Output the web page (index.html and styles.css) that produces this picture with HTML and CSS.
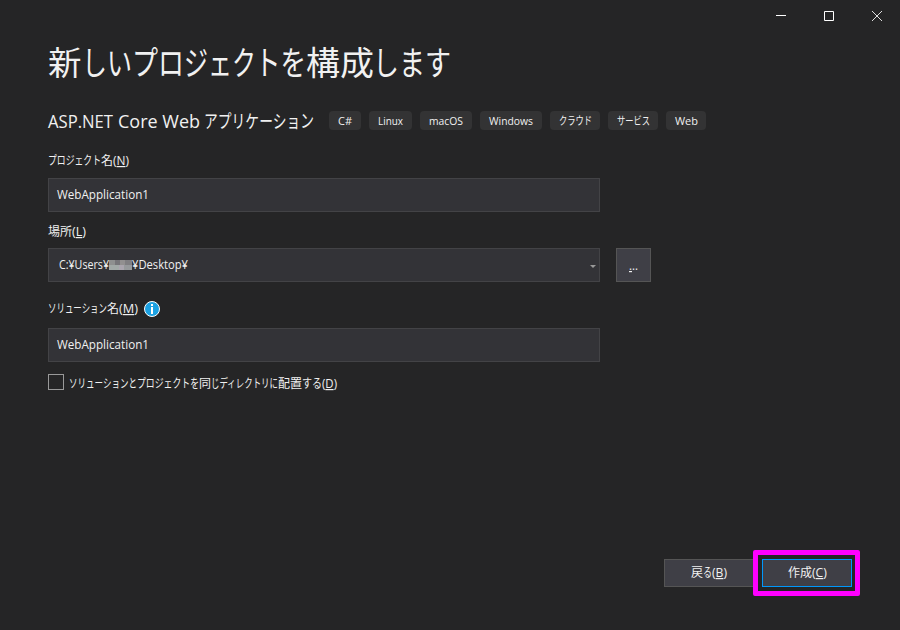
FILE: index.html
```html
<!DOCTYPE html>
<html lang="ja">
<head>
<meta charset="utf-8">
<title>新しいプロジェクトを構成します</title>
<link rel="stylesheet" href="styles.css">
</head>
<body>
<div class="window">
  <header class="titlebar">
    <svg class="control" viewBox="0 0 48 32"><path d="M20 15.5h10"/></svg>
    <svg class="control" viewBox="0 0 48 32"><path d="M20.500 11.500h9v9h-9z"/></svg>
    <svg class="control close" viewBox="0 0 48 32"><path d="M20 11l10 10M30 11l-10 10"/></svg>
  </header>
  <main class="content">
    <h1 class="heading"><svg class="type" width="410" height="50">
      <text x="0" y="34">新</text>
      <text x="34" y="34" textLength="50" lengthAdjust="spacingAndGlyphs">しい</text>
      <text x="84" y="34" textLength="52" lengthAdjust="spacingAndGlyphs">プロ</text>
      <text x="136" y="34" textLength="72" lengthAdjust="spacingAndGlyphs">ジェク</text>
      <text x="207" y="34" textLength="51" lengthAdjust="spacingAndGlyphs">トを</text>
      <text x="258" y="34" textLength="68" lengthAdjust="spacingAndGlyphs">構成</text>
      <text x="325" y="34" textLength="78" lengthAdjust="spacingAndGlyphs">します</text>
    </svg></h1>
    <div class="template">
      <svg class="type template-name" width="281" height="30">
        <text x="0" y="22" textLength="65" lengthAdjust="spacingAndGlyphs">ASP.NET</text>
        <text x="70" y="22" textLength="82" lengthAdjust="spacingAndGlyphs">Core Web</text>
        <text x="156" y="22" textLength="110" lengthAdjust="spacingAndGlyphs">アプリケーション</text>
      </svg>
      <ul class="tags">
        <li><svg class="type" width="14" height="19"><text y="14" textLength="14" lengthAdjust="spacingAndGlyphs">C#</text></svg></li>
        <li><svg class="type" width="25" height="19"><text y="14" textLength="25" lengthAdjust="spacingAndGlyphs">Linux</text></svg></li>
        <li><svg class="type" width="34" height="19"><text y="14" textLength="34" lengthAdjust="spacingAndGlyphs">macOS</text></svg></li>
        <li><svg class="type" width="44" height="19"><text y="14" textLength="44" lengthAdjust="spacingAndGlyphs">Windows</text></svg></li>
        <li><svg class="type" width="32" height="19"><text y="14" textLength="33" lengthAdjust="spacingAndGlyphs">クラウド</text></svg></li>
        <li><svg class="type" width="32" height="19"><text y="14" textLength="33" lengthAdjust="spacingAndGlyphs">サービス</text></svg></li>
        <li><svg class="type" width="22" height="19"><text y="14" textLength="23" lengthAdjust="spacingAndGlyphs">Web</text></svg></li>
      </ul>
    </div>

    <div class="label"><svg class="type" width="90" height="20">
      <text x="0" y="14" textLength="53" lengthAdjust="spacingAndGlyphs">プロジェクト</text><text x="53" y="14">名</text>
      <text x="65" y="14" textLength="16" lengthAdjust="spacingAndGlyphs">(<tspan class="key">N</tspan>)</text>
    </svg></div>
    <div class="field"><svg class="type" width="100" height="32"><text y="20" textLength="92" lengthAdjust="spacingAndGlyphs">WebApplication1</text></svg></div>

    <div class="label label-location"><svg class="type" width="60" height="20">
      <text x="0" y="14" textLength="24" lengthAdjust="spacingAndGlyphs">場所</text>
      <text x="24" y="14" textLength="14" lengthAdjust="spacingAndGlyphs">(<tspan class="key">L</tspan>)</text>
    </svg></div>
    <div class="location">
      <div class="field combo">
        <svg class="type" width="140" height="32">
          <text x="0" y="20" textLength="50" lengthAdjust="spacingAndGlyphs">C:¥Users¥</text>
          <g class="redacted">
            <path fill="#8f9090" d="M50 11h6v5h-6z"/><path fill="#77767a" d="M56 11h5v5h-5z"/><path fill="#929090" d="M61 11h5v5h-5z"/><path fill="#807f82" d="M66 11h7v5h-7z"/>
            <path fill="#a2a9a7" d="M50 16h10v5h-10z"/><path fill="#aaa5ae" d="M60 16h5v5h-5z"/><path fill="#96999b" d="M65 16h8v5h-8z"/>
          </g>
          <text x="73" y="20" textLength="56" lengthAdjust="spacingAndGlyphs">¥Desktop¥</text>
        </svg>
        <svg class="arrow" viewBox="0 0 6 3"><path d="M0 0h6L3 3z"/></svg>
      </div>
      <div class="browse"><svg class="type" width="9" height="32"><text y="21" textLength="9" lengthAdjust="spacingAndGlyphs"><tspan class="key">.</tspan>..</text></svg></div>
    </div>

    <div class="label label-solution">
      <svg class="type" width="96" height="20">
        <text x="0" y="14" textLength="59" lengthAdjust="spacingAndGlyphs">ソリューション</text><text x="59" y="14">名</text>
        <text x="71" y="14" textLength="19" lengthAdjust="spacingAndGlyphs">(<tspan class="key">M</tspan>)</text>
      </svg>
      <svg class="info" viewBox="0 0 16 16"><circle cx="8" cy="8" r="7.500"/><path d="M7 3h2v2H7zM7 6h2v7H7z"/></svg>
    </div>
    <div class="field"><svg class="type" width="100" height="32"><text y="20" textLength="92" lengthAdjust="spacingAndGlyphs">WebApplication1</text></svg></div>

    <div class="option">
      <span class="checkbox"></span>
      <svg class="type" width="280" height="20">
        <text x="0" y="16" textLength="68" lengthAdjust="spacingAndGlyphs">ソリューションと</text>
        <text x="68" y="16" textLength="62" lengthAdjust="spacingAndGlyphs">プロジェクトを</text>
        <text x="130" y="16">同</text>
        <text x="142" y="16" textLength="67" lengthAdjust="spacingAndGlyphs">じディレクトリに</text>
        <text x="209" y="16" textLength="24" lengthAdjust="spacingAndGlyphs">配置</text>
        <text x="233" y="16" textLength="20" lengthAdjust="spacingAndGlyphs">する</text>
        <text x="253" y="16" textLength="15" lengthAdjust="spacingAndGlyphs">(<tspan class="key">D</tspan>)</text>
      </svg>
    </div>
  </main>
  <footer class="actions">
    <div class="button"><svg class="type" width="36" height="26">
      <text x="0" y="17">戻</text><text x="12" y="17" textLength="9" lengthAdjust="spacingAndGlyphs">る</text>
      <text x="21" y="17" textLength="15" lengthAdjust="spacingAndGlyphs">(<tspan class="key">B</tspan>)</text>
    </svg></div>
    <div class="highlight"><div class="button primary"><svg class="type" width="39" height="26">
      <text x="0" y="17" textLength="24" lengthAdjust="spacingAndGlyphs">作成</text>
      <text x="24" y="17" textLength="15" lengthAdjust="spacingAndGlyphs">(<tspan class="key">C</tspan>)</text>
    </svg></div></div>
  </footer>
</div>
</body>
</html>
```
FILE: styles.css
```css
* { box-sizing: border-box; }

body {
  margin: 0;
  background: #252526;
  color: #f1f1f1;
  font: 12px "Open Sans", "Noto Sans CJK JP", sans-serif;
}

.window {
  display: flex;
  flex-direction: column;
  width: 900px;
  height: 630px;
  background: #252526;
}

svg { display: block; flex: none; }

.type { overflow: visible; fill: #f1f1f1; }
.key { text-decoration: underline; text-underline-offset: 2px; text-decoration-thickness: 1px; }

.titlebar { display: flex; justify-content: flex-end; height: 32px; }
.control { width: 48px; height: 32px; fill: none; stroke: #fff; stroke-width: 1; }
.close { stroke: #ddd; }

.content { flex: 1; padding: 9px 48px 0; }

.heading { height: 50px; margin: 0; font-size: 33.5px; font-weight: 400; }

.template { display: flex; align-items: flex-start; height: 60px; padding-top: 15px; }
.template-name { font-size: 18.500px; }
.tags { display: flex; gap: 8px; margin: 5px 0 0; padding: 0; list-style: none; font-size: 11px; }
.tags li { height: 19px; padding: 0 9px; border-radius: 4px; background: #333334; }

.label { display: flex; height: 27px; }
.label-location { margin-top: 10px; height: 26px; }
.label-solution { margin-top: 17px; height: 29px; }
.info { width: 16px; height: 16px; margin-top: 2px; }
.info circle { fill: #1ba1e2; stroke: #fff; stroke-width: 1; }
.info path { fill: #fff; }

.field {
  display: flex;
  width: 552px;
  height: 34px;
  padding: 0 8px;
  border: 1px solid #434346;
  background: #333337;
}

.location { display: flex; gap: 16px; }
.combo { justify-content: space-between; align-items: center; padding: 0 3px 0 10px; }
.arrow { width: 6px; height: 3px; margin-top: 2px; fill: #999; }
.browse {
  display: flex;
  justify-content: center;
  width: 35px;
  height: 34px;
  border: 1px solid #555;
  background: #3f3f46;
}

.option { display: flex; gap: 5px; margin-top: 10px; }
.checkbox { width: 16px; height: 16px; margin-top: 2px; border: 1px solid #999; background: #252526; }

.actions { display: flex; height: 80px; padding-left: 664px; }
.button {
  display: flex;
  justify-content: center;
  width: 90px;
  height: 28px;
  margin-top: 9px;
  border: 1px solid #555;
  background: #3f3f46;
}
.highlight {
  width: 107px;
  height: 46px;
  margin-left: -1px;
  padding: 4px 4px;
  border: 5px solid #f0f;
  border-radius: 2px;
  background: #252526;
}
.primary { margin: 0; border-color: #0097fb; }
```
